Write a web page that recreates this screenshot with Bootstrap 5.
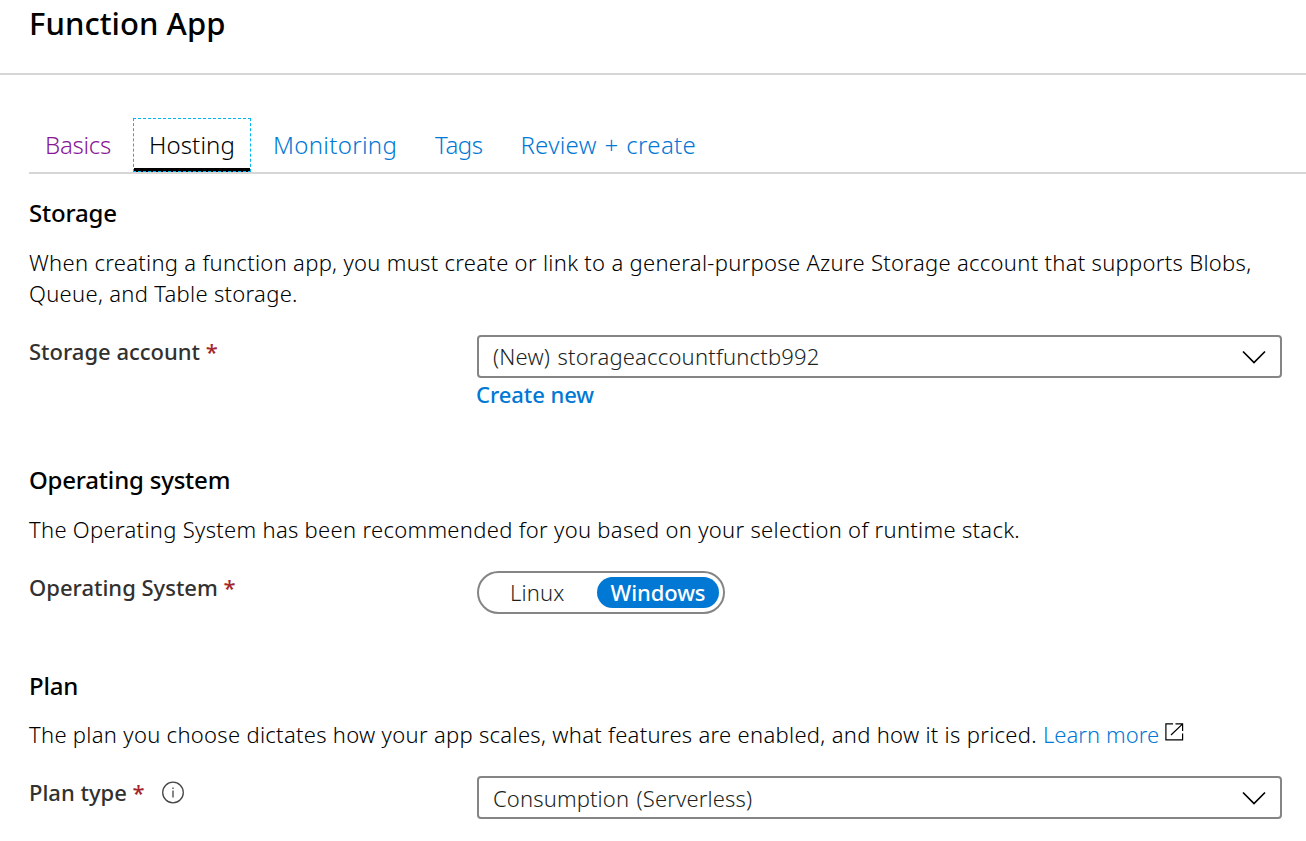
<!DOCTYPE html>
<html lang="en">
<head>
<meta charset="utf-8">
<meta name="viewport" content="width=device-width, initial-scale=1">
<title>Function App</title>
<link href="https://cdn.jsdelivr.net/npm/bootstrap@5.3.0/dist/css/bootstrap.min.css" rel="stylesheet">
<style>
  body { font-family: "Noto Sans", "Open Sans", sans-serif; font-size: 22px; line-height: 31px; font-weight: 300; color: #000; letter-spacing: .3px; background: #fff; overflow: hidden; }
  .blade-head { height: 75px; padding: 3px 29px 0; border-bottom: 2px solid #d6d6d6; }
  .blade-title { font-size: 31px; line-height: 40px; font-weight: 500; color: #000; letter-spacing: .05px; margin: 0; }
  .blade-body { padding: 43px 24px 0 29px; }
  .blade-tabs { margin-right: -24px; border-bottom: 2px solid #d6d6d6; gap: 6px; }
  .blade-tabs .nav-link { height: 54px; padding: 8px 15px 0; border: 1px solid transparent; border-radius: 0; font-size: 24px; line-height: 36px; color: #0078d4; white-space: nowrap; }
  .blade-tabs .nav-link.visited { color: #881798; letter-spacing: -.27px; }
  .blade-tabs .nav-link.active { color: #000; border: 1px dashed #00b7f1; box-shadow: inset 0 -3px #000; background: linear-gradient(#000, #000) bottom / 100% 1px no-repeat border-box; letter-spacing: .12px; }
  .blade-tabs .nav-link.narrow { letter-spacing: -.5px; }
  .blade-tabs .nav-link.wide { letter-spacing: .3px; word-spacing: 1.3px; }
  .section-title { font-size: 24px; line-height: 32px; font-weight: 500; color: #000; margin: 0 0 18px; letter-spacing: -.2px; }
  .section-text { margin: 0 0 26px; }
  .field-row { display: grid; grid-template-columns: 448px 1fr; }
  .field-name { font-weight: 500; color: #323130; padding-top: 1px; letter-spacing: 0; }
  .required { color: #a4262c; }
  .pick { height: 43px; padding: 0 14px; border: 2px solid #858585; border-radius: 4px; background: #fff; color: #201f1e; letter-spacing: .2px; word-spacing: 1.5px; }
  .pick-plan span { padding-top: 1px; letter-spacing: .13px; }
  .blue-link { color: #0078d4; text-decoration: none; letter-spacing: .05px; }
  .strong-link { font-weight: 500; margin-top: 1px; margin-left: -1px; letter-spacing: -.05px; }
  .switch-box { width: 248px; height: 43px; border: 2px solid #858585; border-radius: 22px; padding: 0 4px 0 31px; color: #201f1e; letter-spacing: .15px; }
  .switch-on { width: 122px; height: 31px; border-radius: 16px; background: #0078d4; color: #fff; font-weight: 500; line-height: 31px; text-align: center; letter-spacing: -.1px; }
  .storage-section { margin-top: 23px; }
  .os-section { margin-top: 54px; }
  .plan-section { margin-top: 56px; }
  .plan-section .section-title { margin-bottom: 17px; }
  .open-icon { vertical-align: 2px; }
  .info-icon { margin-top: 3px; }
</style>
</head>
<body>
<header class="blade-head"><h1 class="blade-title">Function App</h1></header>
<main class="blade-body">
  <ul class="nav blade-tabs flex-nowrap">
    <li class="nav-item"><a class="nav-link visited" href="#">Basics</a></li>
    <li class="nav-item"><a class="nav-link active" href="#">Hosting</a></li>
    <li class="nav-item"><a class="nav-link" href="#">Monitoring</a></li>
    <li class="nav-item"><a class="nav-link narrow" href="#">Tags</a></li>
    <li class="nav-item"><a class="nav-link wide" href="#">Review + create</a></li>
  </ul>

  <section class="storage-section">
    <h2 class="section-title">Storage</h2>
    <p class="section-text">When creating a function app, you must create or link to a general-purpose Azure Storage account that supports Blobs, Queue, and Table storage.</p>
    <div class="field-row">
      <div class="field-name">Storage account <span class="required">*</span></div>
      <div>
        <div class="pick d-flex align-items-center justify-content-between">
          <span>(New) storageaccountfunctb992</span>
          <svg width="24" height="14" viewBox="0 0 24 14" fill="none" stroke="#000" stroke-width="1.7"><path d="M1 1.5 12 12.5 23 1.5"/></svg>
        </div>
        <a class="blue-link strong-link d-block" href="#">Create new</a>
      </div>
    </div>
  </section>

  <section class="os-section">
    <h2 class="section-title">Operating system</h2>
    <p class="section-text">The Operating System has been recommended for you based on your selection of runtime stack.</p>
    <div class="field-row">
      <div class="field-name">Operating System <span class="required">*</span></div>
      <div class="switch-box d-flex align-items-center justify-content-between">
        <span>Linux</span><span class="switch-on">Windows</span>
      </div>
    </div>
  </section>

  <section class="plan-section">
    <h2 class="section-title">Plan</h2>
    <p class="section-text text-nowrap">The plan you choose dictates how your app scales, what features are enabled, and how it is priced. <a class="blue-link" href="#">Learn more</a> <svg class="open-icon" width="19" height="18" viewBox="0 0 19 18" fill="none" stroke="#000" stroke-width="1.2"><path d="M8 .9H.9v15.9H17.6v-6.3M10.5 .9h7.1v7M17.4 1.1 6 12"/></svg></p>
    <div class="field-row">
      <div class="field-name d-flex">Plan type&nbsp;<span class="required">*</span>
        <svg class="info-icon ms-3" width="24" height="24" viewBox="0 0 24 24" fill="none" stroke="#484644" stroke-width="1.3"><circle cx="12" cy="12.5" r="10.3"/><path d="M12 10.5v7M12 7.5v1.6"/></svg>
      </div>
      <div class="pick pick-plan d-flex align-items-center justify-content-between">
        <span>Consumption (Serverless)</span>
        <svg width="24" height="14" viewBox="0 0 24 14" fill="none" stroke="#000" stroke-width="1.7"><path d="M1 1.5 12 12.5 23 1.5"/></svg>
      </div>
    </div>
  </section>
</main>
<script src="https://cdn.jsdelivr.net/npm/bootstrap@5.3.0/dist/js/bootstrap.bundle.min.js"></script>
</body>
</html>
